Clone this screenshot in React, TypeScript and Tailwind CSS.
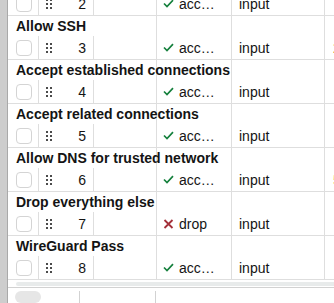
import { Fragment } from "react";

type Rule = {
  id: number;
  label: string;
  action: "accept" | "drop";
  chain: string;
  extra?: { text: string; color: string };
};

const rules: Rule[] = [
  { id: 3, label: "Allow SSH", action: "accept", chain: "input", extra: { text: "22", color: "text-[#b45309]" } },
  { id: 4, label: "Accept established connections", action: "accept", chain: "input" },
  { id: 5, label: "Accept related connections", action: "accept", chain: "input" },
  { id: 6, label: "Allow DNS for trusted network", action: "accept", chain: "input", extra: { text: "53", color: "text-[#e0a526]" } },
  { id: 7, label: "Drop everything else", action: "drop", chain: "input" },
  { id: 8, label: "WireGuard Pass", action: "accept", chain: "input" },
];

const DragHandle = () => (
  <div className="grid grid-cols-2 gap-x-[2px] gap-y-[2px]">
    {Array.from({ length: 6 }).map((_, i) => (
      <span key={i} className="block h-[2px] w-[2px] bg-[#4b4b4b]" />
    ))}
  </div>
);

const ActionCell = ({ action }: { action: Rule["action"] }) =>
  action === "accept" ? (
    <div className="flex items-center gap-[5px]">
      <svg width="11" height="9" viewBox="0 0 11 9" className="shrink-0">
        <polyline points="1,4.5 4,7.5 10,1.2" fill="none" stroke="#15803d" strokeWidth="1.7" />
      </svg>
      <span className="max-w-[40px] truncate">accept</span>
    </div>
  ) : (
    <div className="flex items-center gap-[5px]">
      <svg width="11" height="10" viewBox="0 0 11 10" className="shrink-0">
        <path d="M1.5 1 L9.5 9 M9.5 1 L1.5 9" stroke="#a3303a" strokeWidth="1.8" />
      </svg>
      <span>drop</span>
    </div>
  );

const DataRow = ({ rule }: { rule: Rule }) => (
  <div className="flex h-[24px] border-b border-[#dedede]">
    <div className="flex w-[30px] shrink-0 items-center pl-[8px]">
      <span className="block h-[16px] w-[16px] rounded-[4px] border border-[#d4d4d4] bg-white" />
    </div>
    <div className="flex w-[55px] shrink-0 items-center justify-between border-l border-[#dedede] pl-[7px] pr-[7px]">
      <DragHandle />
      <span>{rule.id}</span>
    </div>
    <div className="w-[63px] shrink-0 border-l border-[#dedede]" />
    <div className="flex w-[75px] shrink-0 items-center border-l border-[#dedede] pl-[6px]">
      <ActionCell action={rule.action} />
    </div>
    <div className="flex w-[93px] shrink-0 items-center border-l border-[#dedede] pl-[7px]">
      {rule.chain}
    </div>
    <div className="flex w-[80px] shrink-0 items-center border-l border-[#dedede] pl-[8px]">
      {rule.extra && <span className={rule.extra.color}>{rule.extra.text}</span>}
    </div>
  </div>
);

const LabelRow = ({ label }: { label: string }) => (
  <div className="flex h-[20px]">
    <div className="relative z-10 flex w-[148px] shrink-0 items-center whitespace-nowrap pl-[8px] font-bold">
      {label}
    </div>
    <div className="w-[75px] shrink-0 border-l border-[#dedede]" />
    <div className="w-[93px] shrink-0 border-l border-[#dedede]" />
    <div className="w-[80px] shrink-0 border-l border-[#dedede]" />
  </div>
);

export default function App() {
  return (
    <div className="flex h-[303px] w-[334px] overflow-hidden bg-white font-['Liberation_Sans',Arial,sans-serif] text-[14px] leading-none text-[#141414]">
      <div className="w-[8px] shrink-0 border-r border-[#a9a9a9] bg-[#cdcdcd]" />
      <div className="flex min-w-0 flex-1 flex-col overflow-hidden">
        <div className="-mt-[8px]">
          <DataRow rule={{ id: 2, label: "", action: "accept", chain: "input" }} />
          {rules.map((rule) => (
            <Fragment key={rule.id}>
              <LabelRow label={rule.label} />
              <DataRow rule={rule} />
            </Fragment>
          ))}
        </div>
        <div className="flex h-[14px] items-center border-b border-[#d2d2d2] pl-[8px]">
          <div className="h-[4px] w-[400px] shrink-0 rounded-full bg-[#e8ebeb]" />
        </div>
        <div className="flex flex-1 items-start pt-[3px]">
          <div className="ml-[7px] h-[12px] w-[26px] rounded-full bg-[#e6e6e6]" />
          <div className="ml-[38px] h-full border-l border-[#d2d2d2]" />
          <div className="ml-[75px] h-full border-l border-[#d2d2d2]" />
        </div>
      </div>
    </div>
  );
}
